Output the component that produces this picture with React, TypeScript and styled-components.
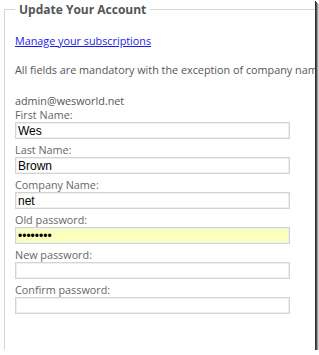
import React from "react";
import styled, { createGlobalStyle } from "styled-components";

const Global = createGlobalStyle`
  html, body { margin: 0; padding: 0; background: #fff; overflow: hidden; }
  body { font-family: "Open Sans", "Noto Sans", sans-serif; }
`;

const Frame = styled.div`
  width: 315px;
  height: 350px;
  background: #fff;
  overflow: hidden;
  box-shadow: 1px 1px 0 #2e2e2e, 2px 2px 0 #555, 3px 3px 0 #999, 4px 4px 0 #d4d4d4;
`;

const Fieldset = styled.fieldset`
  margin: 2px 0 0 4px;
  width: 360px;
  height: 400px;
  box-sizing: border-box;
  border: 1px solid #d6d6d6;
  border-right: none;
  padding: 0 0 0 10px;
  display: flex;
  flex-direction: column;
`;

const Legend = styled.legend`
  padding: 0 4px;
  font-size: 12px;
  font-weight: 700;
  color: #555;
  line-height: 15px;
`;

const Link = styled.a`
  margin-top: 16px;
  font-size: 10.8px;
  line-height: 15px;
  color: #1a1aee;
  text-decoration: underline;
  align-self: flex-start;
`;

const Note = styled.p`
  margin: 14px 0 0 0;
  font-size: 10.8px;
  line-height: 15px;
  color: #555;
  white-space: nowrap;
`;

const Email = styled.div`
  margin-top: 17px;
  font-size: 10.8px;
  line-height: 14px;
  color: #555;
`;

const Field = styled.div`
  display: flex;
  flex-direction: column;
  margin-bottom: 4px;
`;

const Label = styled.label`
  font-size: 10.8px;
  line-height: 14px;
  color: #666;
`;

const Input = styled.input<{ $filled?: boolean }>`
  width: 275px;
  height: 17px;
  box-sizing: border-box;
  margin: 0;
  padding: 0 2px;
  border: 1px solid #d4d4d4;
  box-shadow: inset 0 0 0 1px #efefef;
  background: ${(p) => (p.$filled ? "#faffbd" : "#fff")};
  font-family: "Liberation Sans", Arial, sans-serif;
  font-size: 12px;
  color: #000;
  outline: none;
`;

const fields: { label: string; value: string; type?: string; filled?: boolean }[] = [
  { label: "First Name:", value: "Wes" },
  { label: "Last Name:", value: "Brown" },
  { label: "Company Name:", value: "net" },
  { label: "Old password:", value: "password", type: "password", filled: true },
  { label: "New password:", value: "", type: "password" },
  { label: "Confirm password:", value: "", type: "password" },
];

export default function App() {
  return (
    <>
      <Global />
      <Frame>
        <Fieldset>
          <Legend>Update Your Account</Legend>
          <Link href="#">Manage your subscriptions</Link>
          <Note>All fields are mandatory with the exception of company name</Note>
          <Email>admin@wesworld.net</Email>
          {fields.map((f) => (
            <Field key={f.label}>
              <Label>{f.label}</Label>
              <Input type={f.type ?? "text"} defaultValue={f.value} $filled={f.filled} />
            </Field>
          ))}
        </Fieldset>
      </Frame>
    </>
  );
}
